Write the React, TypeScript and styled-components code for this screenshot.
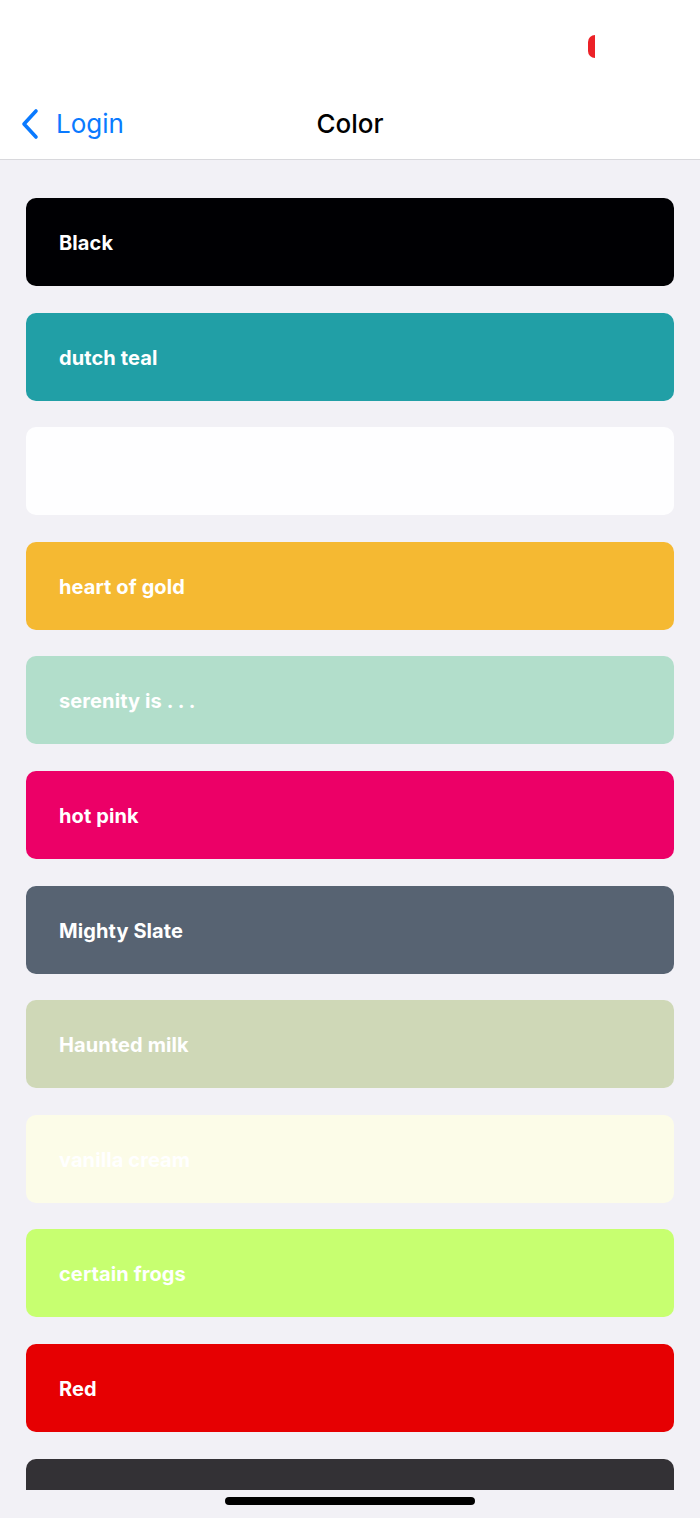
import { Fragment } from "react"
import styled, { createGlobalStyle } from "styled-components"

const GlobalStyle = createGlobalStyle`
    html, body {
        margin: 0;
        padding: 0;
        background: #f2f1f6;
    }
    * {
        box-sizing: border-box;
    }
`

const Screen = styled('div')`
    position: relative;
    width: 700px;
    height: 1518px;
    overflow: hidden;
    display: flex;
    flex-direction: column;
    background: #f2f1f6;
    font-family: Inter, "Noto Sans", sans-serif;
`

const StatusBar = styled('div')`
    position: relative;
    height: 88px;
    background: #ffffff;
    flex-shrink: 0;
`

const RecordDot = styled('span')`
    position: absolute;
    left: 588px;
    top: 35px;
    width: 7px;
    height: 23px;
    border-radius: 7px 0 0 7px;
    background: #ec2127;
`

const NavBar = styled('div')`
    position: relative;
    height: 72px;
    flex-shrink: 0;
    display: flex;
    align-items: center;
    justify-content: center;
    background: #ffffff;
    border-bottom: 1.5px solid #d8d8dc;

    .back {
        position: absolute;
        left: 20px;
        top: 50%;
        transform: translateY(-50%);
        display: flex;
        align-items: center;
        gap: 16px;
        color: #0a7aff;
        font-size: 26px;
        font-weight: 400;
    }

    .title {
        font-size: 26px;
        font-weight: 500;
        color: #000000;
        margin: 0;
    }
`

const List = styled('div')`
    height: 1330px;
    overflow: hidden;
    display: flex;
    flex-direction: column;
    gap: 26.6px;
    padding: 38px 26px 0;
    flex-shrink: 0;
`

const Swatch = styled('div')<{ $bg: string }>`
    flex-shrink: 0;
    height: 88px;
    border-radius: 10px;
    background: ${p => p.$bg};
    display: flex;
    align-items: center;
    padding: 2px 0 0 33px;
    color: #ffffff;
    font-size: 20px;
    font-weight: 700;
    letter-spacing: 0.1px;
`

const HomeIndicator = styled('div')`
    position: absolute;
    left: 225px;
    bottom: 13px;
    width: 250px;
    height: 8px;
    border-radius: 4px;
    background: #000000;
`

const colors: { name: string, hex: string }[] = [
    { name: "Black", hex: "#000003" },
    { name: "dutch teal", hex: "#219fa6" },
    { name: "", hex: "#fefeff" },
    { name: "heart of gold", hex: "#f5b932" },
    { name: "serenity is . . .", hex: "#b2decb" },
    { name: "hot pink", hex: "#ec0067" },
    { name: "Mighty Slate", hex: "#576372" },
    { name: "Haunted milk", hex: "#cfd8b7" },
    { name: "vanilla cream", hex: "#fcfce8" },
    { name: "certain frogs", hex: "#c7ff70" },
    { name: "Red", hex: "#e60002" },
    { name: "", hex: "#333135" },
]

const App = (): JSX.Element => {
    return (
        <Fragment>
            <GlobalStyle />
            <Screen>
                <StatusBar>
                    <RecordDot />
                </StatusBar>

                <NavBar>
                    <div className="back">
                        <svg width="20" height="32" viewBox="0 0 20 32" fill="none">
                            <path d="M16 3 L4 16 L16 29" stroke="#0a7aff" strokeWidth="3.6" strokeLinecap="round" strokeLinejoin="round" />
                        </svg>
                        <span>Login</span>
                    </div>
                    <p className="title">Color</p>
                </NavBar>

                <List>
                    {colors.map((c, i) => <Swatch key={i} $bg={c.hex}>{c.name}</Swatch>)}
                </List>

                <HomeIndicator />
            </Screen>
        </Fragment>
    )
}

export default App
